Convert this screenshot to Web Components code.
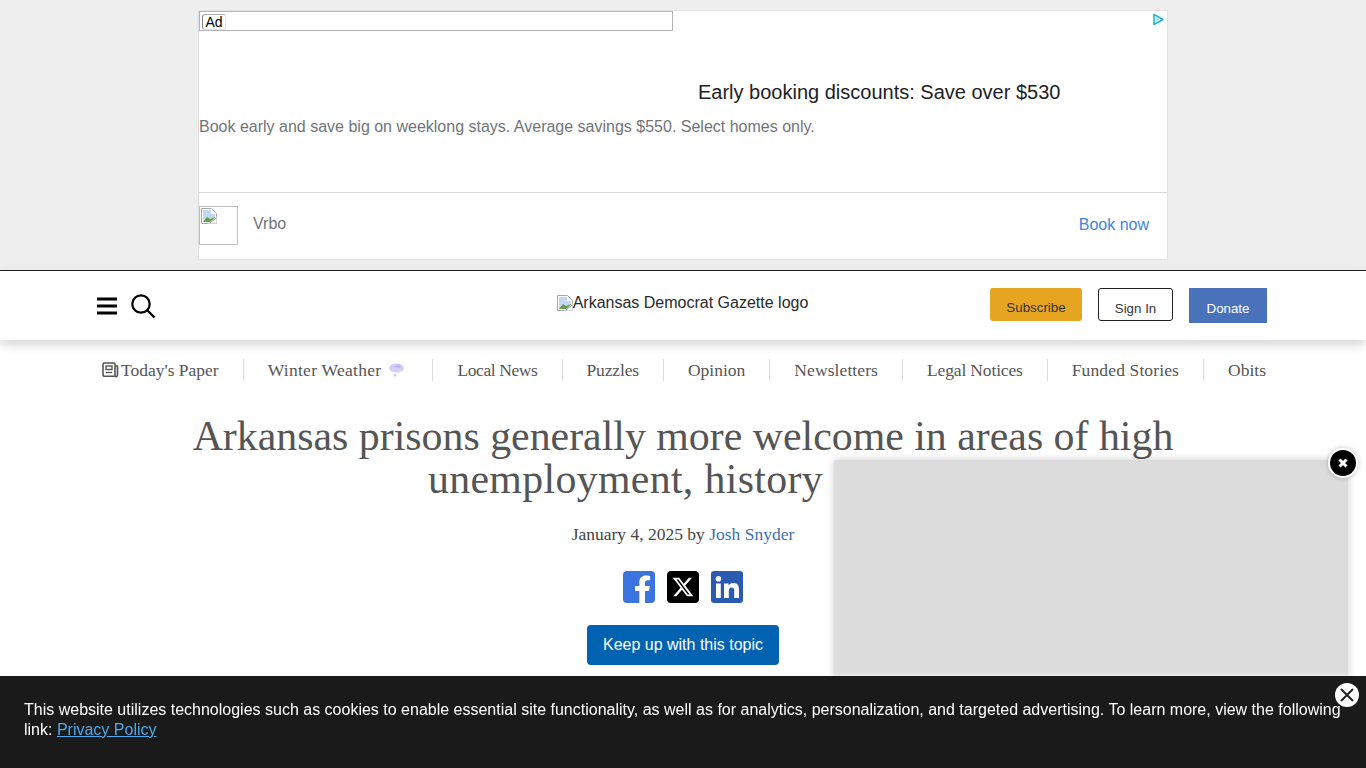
<!DOCTYPE html>
<html><head><meta charset="utf-8"><title>Arkansas prisons</title>
<style>
html,body{margin:0;padding:0;background:#fff;overflow:hidden;height:768px}
body{font-family:"Liberation Sans",Arial,sans-serif}
</style></head><body>
<ad-banner></ad-banner>
<site-header></site-header>
<site-nav></site-nav>
<article-head></article-head>
<float-video></float-video>
<cookie-bar></cookie-bar>
<script>
const broken=(s=16)=>`<svg width="${s}" height="${s}" viewBox="0 0 16 16" style="flex:none;display:block"><path d="M.5.5h10l5 5v10H.5z" fill="#fff" stroke="#a9a9a9"/><path d="M2 2h8v4h4v3l-6 4H2z" fill="#c5d8f2"/><path d="M2 14l4-5 3 2 5-2v5z" fill="#5fa04a"/><path d="M7 15.500l8.500-7v7z" fill="#fff"/><path d="M9 15l6-5" stroke="#8a8a8a" fill="none"/></svg>`;
function def(name,html){customElements.define(name,class extends HTMLElement{constructor(){super();this.attachShadow({mode:'open'}).innerHTML=html}})}

def('ad-banner',`<style>
:host{display:block;background:#eee;height:270px;padding-top:10px;box-sizing:border-box}
.ad{width:970px;height:250px;margin:0 auto;background:#fff;box-sizing:border-box;border:1px solid #e3e3e3;border-left-color:#ddd;position:relative;display:flex;flex-direction:column}
.top{height:181px;border-bottom:1px solid #d9d9d9;display:flex;flex-direction:column}
.slot{width:474px;height:20px;box-sizing:border-box;border:1px solid #b5b5b5;background:#fff;padding:2px 0 0 2px;flex:none}
.tag{display:block;width:24px;font-size:14px;line-height:15px;color:#000;text-align:center;border:1px solid #e4e4e4;border-top-color:#aaa;border-left-color:#888;border-radius:3px;height:16px;box-sizing:border-box}
h2{margin:49px 0 0 499px;font-weight:400;font-size:20px;line-height:24px;color:#202124}
p{margin:11px 0 0 0;font-size:16px;line-height:24px;color:#70757a}
.bot{flex:1;display:flex;align-items:center;padding-right:18px}
.box{width:39px;height:39px;box-sizing:border-box;border:1px solid #c0c0c0;flex:none;margin-top:-1px;padding:1px}
.name{margin-left:15px;font-size:16px;color:#70757a;margin-top:-5px}
.cta{margin-left:auto;font-size:16px;color:#4285d9;margin-top:-3px}
.choice{position:absolute;right:2px;top:2px}
</style><div class="ad"><div class="top"><div class="slot"><span class="tag">Ad</span></div><h2>Early booking discounts: Save over $530</h2><p>Book early and save big on weeklong stays. Average savings $550. Select homes only.</p></div>
<div class="bot"><div class="box">${broken(16)}</div><span class="name">Vrbo</span><span class="cta">Book now</span></div>
<svg class="choice" width="13" height="13" viewBox="0 0 13 13"><path d="M2 1.500v10l9-5z" fill="none" stroke="#1fb5cf" stroke-width="1.600" stroke-linejoin="round"/><path d="M4 4.500v4l3.500-2z" fill="#a5dfe9"/></svg></div>`);

def('site-header',`<style>
:host{display:block;position:relative;z-index:1;height:70px;box-sizing:border-box;border-top:1px solid #222;background:#fff;box-shadow:0 5px 10px rgba(0,0,0,.16)}
.w{height:69px;display:grid;grid-template-columns:1fr auto 1fr;padding:0 98px 0 97px}
.l{display:flex;align-items:center;gap:12px;padding-top:1px;margin-left:-1px}
.c{display:flex;align-items:flex-start;padding-top:23px;font-size:16px;line-height:18px;color:#2a2a2a}
.c svg{margin-top:1px}
.r{display:flex;justify-content:flex-end;align-items:flex-start;padding-top:17px;gap:16px;font-size:13.330px;margin-right:1px}
a{display:flex;box-sizing:border-box;justify-content:center;align-items:center}
.s{width:92px;height:33px;background:#e6a521;color:#333;border-radius:3px;padding-top:6px}
.i{width:75px;height:33px;border:1px solid #222;color:#333;border-radius:3px;padding-top:7px}
.d{width:78px;height:35px;background:#4a72bb;color:#fff;padding-top:6px}
</style><div class="w"><div class="l">
<svg width="22" height="20" viewBox="0 0 22 20"><path d="M1 3h20M1 10h20M1 17h20" stroke="#000" stroke-width="3"/></svg>
<svg width="26" height="26" viewBox="0 0 26 26" fill="none" stroke="#000"><circle cx="11" cy="11" r="8.700" stroke-width="2.200"/><path d="M17.500 17.500l7 7" stroke-width="2.400"/></svg></div>
<div class="c">${broken(16)}<span>Arkansas Democrat Gazette logo</span></div>
<div class="r"><a class="s">Subscribe</a><a class="i">Sign In</a><a class="d">Donate</a></div></div>`);

def('site-nav',`<style>
:host{display:block;height:60px;font-family:"Liberation Serif",Georgia,serif;font-size:17.500px;color:#555}
ul{margin:0;list-style:none;display:flex;justify-content:center;padding:19px 0 0 2px}
li{display:flex;align-items:center;height:22px;padding:0 24px;border-left:1px solid #ddd;white-space:nowrap}
li:first-child{border-left:0;padding-left:0}li:last-child{padding-right:0}
svg{flex:none}
</style><ul>
<li style="gap:2px"><svg width="17" height="16" viewBox="0 0 17 16" fill="none" stroke="#555" stroke-width="1.600"><path d="M1 2.500A1.500 1.500 0 0 1 2.500 1H12a1 1 0 0 1 1 1v12.200H2.500A1.500 1.500 0 0 1 1 13z"/><path d="M13 4h2.500v9a1.500 1.500 0 0 1-2.500 1.200"/><rect x="4" y="4" width="6" height="3.500" stroke-width="1.400"/><path d="M4 10.500h6" stroke-width="1.400"/></svg>Today's Paper</li>
<li style="padding-right:27px"><span style="letter-spacing:.28px">Winter Weather</span><svg style="margin-left:7px" width="17" height="17" viewBox="0 0 17 17"><ellipse cx="8.500" cy="6" rx="7.500" ry="4.500" fill="#d5cff7"/><path d="M5 5l6-3 2 4z" fill="#bdb5f0"/><circle cx="7" cy="13" r="1.500" fill="#cfc8f5"/></svg></li>
<li><span style="letter-spacing:-.4px">Local News</span></li><li><span style="letter-spacing:-.15px">Puzzles</span></li><li>Opinion</li><li><span style="letter-spacing:.1px">Newsletters</span></li><li><span style="letter-spacing:-.15px">Legal Notices</span></li><li><span style="letter-spacing:.13px">Funded Stories</span></li><li>Obits</li></ul>`);

def('article-head',`<style>
:host{display:block;text-align:center;font-family:"Liberation Serif",Georgia,serif;color:#555}
h1{margin:0 auto;width:1000px;font-weight:400;font-size:41.850px;line-height:43px;padding-top:15px;color:#555}
h1 span{letter-spacing:.33px}
.by{margin-top:22px;font-size:17.500px;line-height:22px;color:#444}
.by a{color:#3f6fa8}
.sh{display:flex;justify-content:center;gap:12px;margin-top:26px}
.btn{display:inline-block;margin-top:22px;background:#0162b1;color:#fff;border-radius:4px;font:16px/40px "Liberation Sans",Arial,sans-serif;padding:0 16px}
svg{display:block}
</style><h1>Arkansas prisons generally more welcome in areas of high <span>unemployment, history</span> shows</h1>
<div class="by">January 4, 2025 by <a>Josh Snyder</a></div>
<div class="sh">
<svg width="32" height="32" viewBox="0 0 32 32"><rect width="32" height="32" rx="4" fill="#3b73e0"/><path d="M22 32V20h4l.8-5H22v-3c0-1.500.7-2.800 3-2.800h2.100V5c-1-.2-2.600-.4-4-.4-4.100 0-6.800 2.500-6.800 7v3.400H12v5h4.300V32z" fill="#fff"/></svg>
<svg width="32" height="32" viewBox="0 0 32 32"><rect width="32" height="32" rx="4" fill="#000"/><g transform="translate(4.600 4.600) scale(.95)"><path fill="#fff" d="M18.244 2.250h3.308l-7.227 8.260 8.502 11.240H16.170l-5.214-6.817L4.990 21.750H1.680l7.730-8.835L1.254 2.250H8.080l4.713 6.231zm-1.161 17.520h1.833L7.084 4.126H5.117z"/></g></svg>
<svg width="32" height="32" viewBox="0 0 32 32"><rect width="32" height="32" rx="3" fill="#2b5bb0"/><path d="M5 12.500h4.800V27H5zM7.400 5a2.800 2.800 0 1 1 0 5.600 2.800 2.800 0 0 1 0-5.600zM13 12.500h4.500v2c.8-1.300 2.500-2.400 4.800-2.400 4.700 0 5.700 3 5.700 7.200V27h-4.800v-6.700c0-1.800-.2-3.800-2.500-3.800-2.300 0-2.900 1.800-2.900 3.700V27H13z" fill="#fff"/></svg></div>
<a class="btn">Keep up with this topic</a>`);

def('float-video',`<style>
:host{display:block;position:fixed;left:834px;top:460px;width:514px;height:290px;background:#dcdcdc;box-shadow:0 0 8px rgba(0,0,0,.2)}
.x{position:absolute;right:-8px;top:-10px;width:26px;height:26px;border-radius:50%;background:#000;box-shadow:0 0 0 2px #fff,0 0 5px 2px rgba(0,0,0,.25);display:flex;align-items:center;justify-content:center}
</style><div class="x"><svg width="12" height="12" viewBox="0 0 12 12"><path d="M2.500 2.500l7 7M9.500 2.500l-7 7" stroke="#fff" stroke-width="3"/></svg></div>`);

def('cookie-bar',`<style>
:host{display:block;position:fixed;left:0;right:0;bottom:0;height:92px;background:#1a1a1a;color:#fff;font-size:16px;line-height:20px;padding:24px 24px 0;box-sizing:border-box;z-index:5;box-shadow:0 -2px 3px rgba(255,255,255,.35)}
a{color:#4fa8e8;text-decoration:underline}
svg{position:absolute;right:7px;top:7px}
</style>This website utilizes technologies such as cookies to enable essential site functionality, as well as for analytics, personalization, and targeted advertising. To learn more, view the following link: <a>Privacy Policy</a>
<svg width="24" height="24" viewBox="0 0 24 24"><circle cx="12" cy="12" r="12" fill="#fff"/><path d="M6 6l12 12M18 6L6 18" stroke="#222" stroke-width="2"/></svg>`);
</script>
</body></html>
